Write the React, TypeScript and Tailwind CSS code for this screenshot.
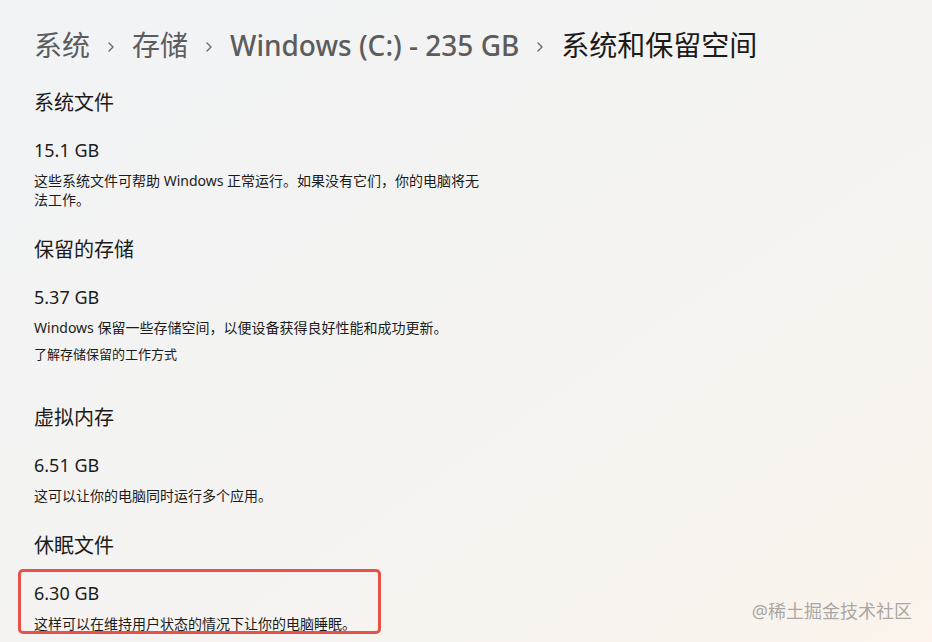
import { ReactNode } from "react";

const font = { fontFamily: '"Noto Sans", "Noto Sans CJK SC", sans-serif' };

function Chevron() {
  return (
    <svg width="8" height="12" viewBox="0 0 8 12" fill="none" className="mt-[3px] shrink-0">
      <path d="M2 2l4 4-4 4" stroke="#6a6a6a" strokeWidth="1.4" strokeLinecap="round" strokeLinejoin="round" />
    </svg>
  );
}

function Section({ title, size, children, className = "" }: { title: string; size?: string; children?: ReactNode; className?: string }) {
  return (
    <section className={className}>
      <h2 className="text-[20px] leading-[28px] text-[#1b1b1b]">{title}</h2>
      {size && <div className="mt-[20px] text-[18px] leading-[26px] text-[#1b1b1b]">{size}</div>}
      {children}
    </section>
  );
}

export default function App() {
  return (
    <div
      style={font}
      className="relative h-[642px] w-full overflow-hidden bg-gradient-to-br from-[#f2f3f5] via-[#f4f3f2] to-[#fbf3ec]"
    >
      <div className="pl-[34px] pt-[27px]">
        {/* breadcrumb */}
        <nav className="flex items-center gap-[17px] text-[28px] leading-[36px] text-[#5c5c5c] whitespace-nowrap">
          <span>系统</span>
          <Chevron />
          <span>存储</span>
          <Chevron />
          <span className="font-medium">Windows (C:) - 235 GB</span>
          <Chevron />
          <span className="text-[#1b1b1b]">系统和保留空间</span>
        </nav>

        <Section title="系统文件" size="15.1 GB" className="mt-[26px]">
          <p className="mt-[8px] w-[452px] text-[14px] leading-[19px] text-[#1b1b1b]">
            这些系统文件可帮助 Windows 正常运行。如果没有它们，你的电脑将无法工作。
          </p>
        </Section>

        <Section title="保留的存储" size="5.37 GB" className="mt-[27px]">
          <p className="mt-[8px] text-[14px] leading-[19px] text-[#1b1b1b]">
            Windows 保留一些存储空间，以便设备获得良好性能和成功更新。
          </p>
          <p className="mt-[8px] text-[13px] leading-[19px] text-[#1b1b1b]">了解存储保留的工作方式</p>
        </Section>

        <Section title="虚拟内存" size="6.51 GB" className="mt-[40px]">
          <p className="mt-[8px] text-[14px] leading-[19px] text-[#1b1b1b]">这可以让你的电脑同时运行多个应用。</p>
        </Section>

        <Section title="休眠文件" className="mt-[27px]">
          <div className="-ml-[16px] mt-[9px] h-[65px] w-[363px] rounded-[5px] border-[3px] border-[#e8514a] pl-[13px] pt-[8px]">
            <div className="text-[18px] leading-[26px] text-[#1b1b1b]">6.30 GB</div>
            <p className="mt-[8px] text-[14px] leading-[19px] text-[#1b1b1b]">这样可以在维持用户状态的情况下让你的电脑睡眠。</p>
          </div>
        </Section>
      </div>

      {/* watermark */}
      <div className="absolute right-[20px] bottom-[21px] text-[18px] leading-[20px] text-[#a8a5a2] [text-shadow:0_0_1px_#ffffff]">
        @稀土掘金技术社区
      </div>
    </div>
  );
}
